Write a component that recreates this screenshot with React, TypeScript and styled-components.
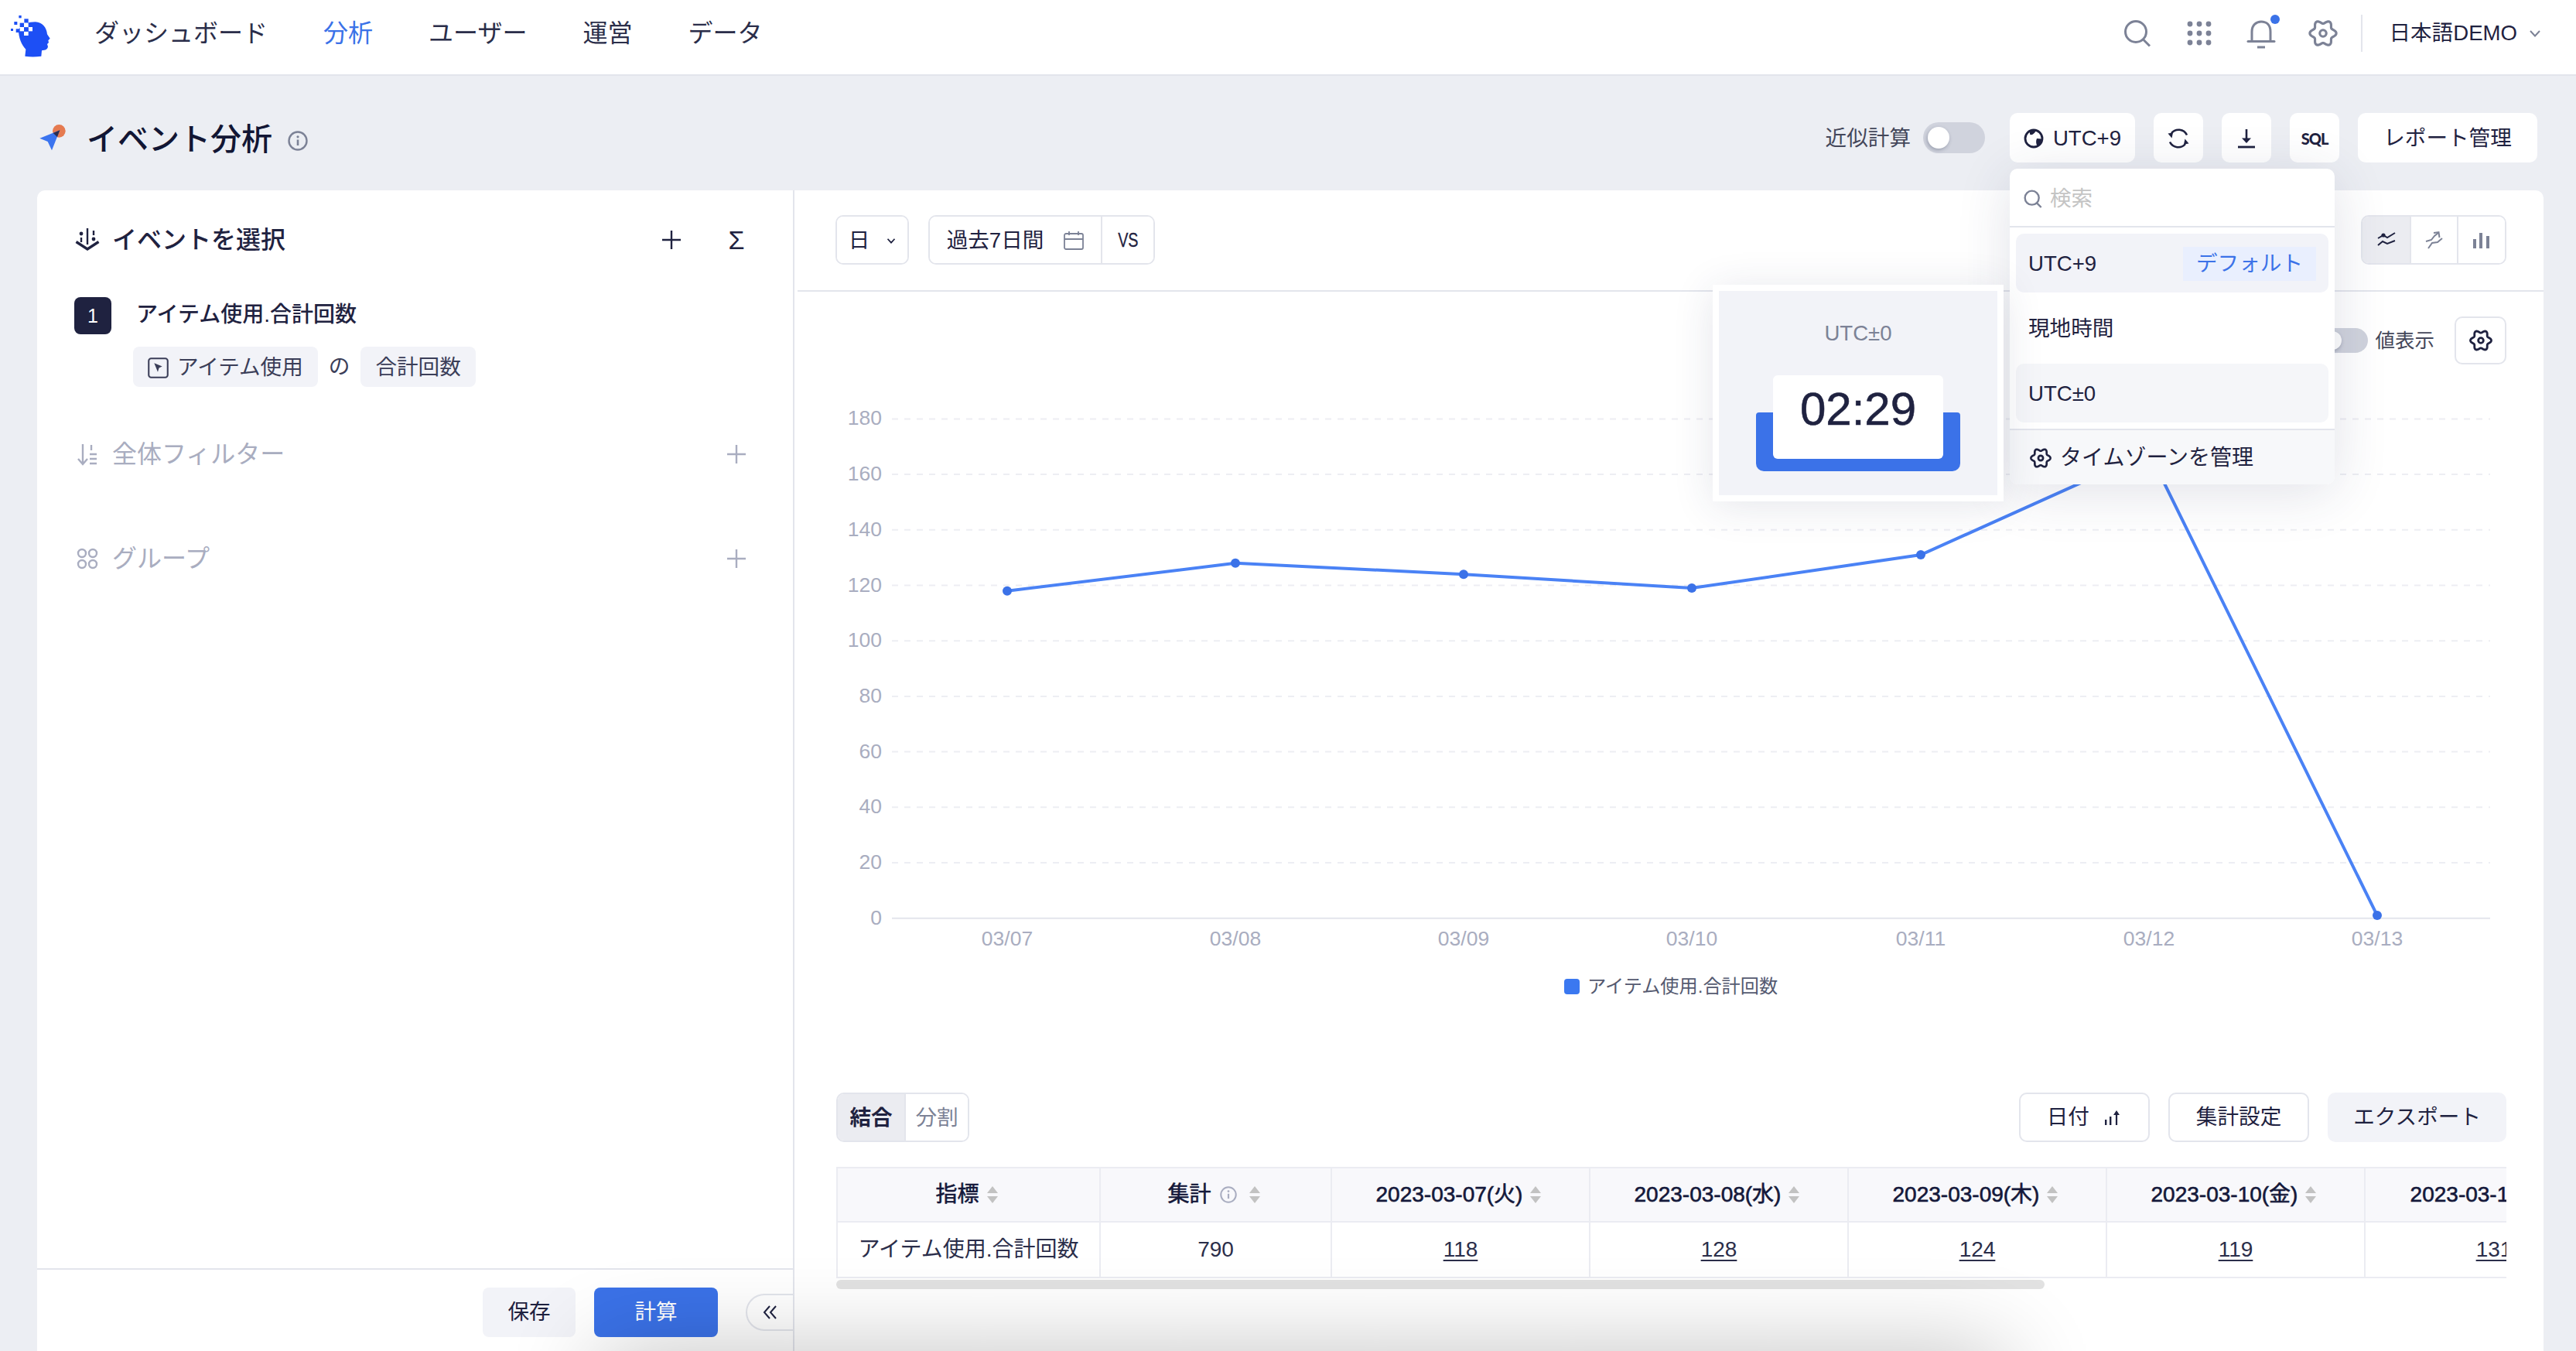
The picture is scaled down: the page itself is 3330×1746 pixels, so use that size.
import React from "react";
import styled, { createGlobalStyle } from "styled-components";

const DARK = "#1F2240";
const GRAY = "#7C8296";
const MUTED = "#A9ADC0";
const BLUE = "#3B72E8";
const LINE = "#E3E5EC";
const SOFT = "#F2F3F8";

const Global = createGlobalStyle`
  * { box-sizing: border-box; }
  html, body { margin: 0; padding: 0; background: #ECEEF3; }
  body {
    font-family: "Liberation Sans", "Noto Sans CJK JP", sans-serif;
    color: ${DARK};
    line-height: 1.2;
    overflow: hidden;
  }
`;

const Page = styled.div`
  position: relative;
  width: 3330px;
  height: 1746px;
  overflow: hidden;
  background: #eceef3;
  display: flex;
  flex-direction: column;
`;

/* ---------- top header ---------- */
const Header = styled.header`
  height: 98px;
  flex: none;
  display: flex;
  align-items: center;
  background: #fff;
  border-bottom: 2px solid ${LINE};
  padding: 0 45px 10px 14px;
`;
const LogoBox = styled.div`
  width: 54px;
  height: 54px;
  margin: 8px 54px 0 0;
  flex: none;
`;
const Nav = styled.nav`
  display: flex;
  gap: 72px;
`;
const NavItem = styled.span<{ $active?: boolean }>`
  font-size: 32px;
  color: ${(p) => (p.$active ? BLUE : "#2B2E4A")};
`;
const HeaderTools = styled.div`
  margin-left: auto;
  display: flex;
  align-items: center;
  gap: 40px;
`;
const IconSlot = styled.div`
  width: 40px;
  height: 40px;
  display: flex;
  align-items: center;
  justify-content: center;
`;
const VDivider = styled.div`
  width: 2px;
  height: 48px;
  background: ${LINE};
  margin-left: -11px;
`;
const Lang = styled.div`
  display: flex;
  align-items: center;
  gap: 15px;
  font-size: 27.6px;
  margin-left: -6px;
`;

/* ---------- title bar ---------- */
const TitleBar = styled.div`
  position: relative;
  z-index: 3;
  flex: none;
  display: flex;
  align-items: center;
  padding: 48px 50px 36px 50px;
`;
const Title = styled.h1`
  margin: 4px 0 0 26px;
  font-size: 40px;
  font-weight: 500;
  color: #121634;
`;
const TitleInfo = styled.div`
  margin: 8px 0 0 20px;
  display: flex;
`;
const TitleActions = styled.div`
  margin-left: auto;
  display: flex;
  align-items: center;
  gap: 24px;
`;
const ApproxLabel = styled.span`
  font-size: 27.6px;
  color: #44475a;
  margin: 2px -8px 0 0;
`;
const Track = styled.div<{ $w: number; $h: number }>`
  width: ${(p) => p.$w}px;
  height: ${(p) => p.$h}px;
  border-radius: ${(p) => p.$h / 2}px;
  background: #d0d3dd;
  display: flex;
  align-items: center;
  padding-left: 6px;
  flex: none;
`;
const Knob = styled.div<{ $s: number }>`
  width: ${(p) => p.$s}px;
  height: ${(p) => p.$s}px;
  border-radius: 50%;
  background: #fff;
  box-shadow: -1px 2px 5px rgba(30, 40, 70, 0.3);
`;
const TopButton = styled.button<{ $w: number }>`
  width: ${(p) => p.$w}px;
  height: 64px;
  display: flex;
  align-items: center;
  justify-content: center;
  gap: 12px;
  border: 0;
  border-radius: 10px;
  background: #fff;
  font: inherit;
  font-size: 27.6px;
  color: ${DARK};
  padding: 2px 0 0;
`;
const SqlText = styled.span`
  font-family: Lato, "Liberation Sans", sans-serif;
  font-weight: 900;
  font-size: 20px;
  letter-spacing: -1px;
`;
const UtcAnchor = styled.div`
  position: relative;
  margin-left: 8px;
`;

/* ---------- dropdown and preview ---------- */
const Dropdown = styled.div`
  position: absolute;
  left: 0;
  top: 72px;
  width: 420px;
  height: 408px;
  background: #fff;
  border-radius: 10px;
  box-shadow: 0 10px 70px rgba(40, 50, 90, 0.14);
  display: flex;
  flex-direction: column;
`;
const SearchRow = styled.div`
  height: 76px;
  flex: none;
  display: flex;
  align-items: center;
  gap: 10px;
  padding: 4px 18px 0;
  border-bottom: 2px solid ${LINE};
  font-size: 27.6px;
  color: #c4c4c4;
`;
const MenuList = styled.div`
  flex: none;
  display: flex;
  flex-direction: column;
  gap: 8px;
  padding: 8px;
  border-bottom: 2px solid ${LINE};
`;
const MenuItem = styled.div<{ $bg?: string }>`
  height: 76px;
  display: flex;
  align-items: center;
  justify-content: space-between;
  padding: 2px 16px 0;
  border-radius: 10px;
  font-size: 27.6px;
  background: ${(p) => p.$bg || "transparent"};
`;
const DefaultTag = styled.span`
  width: 172px;
  height: 44px;
  display: flex;
  align-items: center;
  justify-content: center;
  background: #e9effe;
  color: ${BLUE};
  font-size: 27.6px;
`;
const MenuFooter = styled.div`
  flex: 1;
  display: flex;
  align-items: center;
  gap: 11px;
  padding: 2px 26px 0;
  background: #f7f8fa;
  font-size: 28px;
  border-radius: 0 0 10px 10px;
`;
const Preview = styled.div`
  position: absolute;
  right: calc(100% + 8px);
  top: 222px;
  width: 376px;
  height: 280px;
  padding: 38px 0 0;
  border: 8px solid #fff;
  background: ${SOFT};
  box-shadow: 0 6px 50px rgba(40, 50, 90, 0.12);
  display: flex;
  flex-direction: column;
  align-items: center;
`;
const PreviewLabel = styled.div`
  font-size: 27.6px;
  color: ${GRAY};
  margin-bottom: 38px;
`;
const TimeCard = styled.div`
  position: relative;
  width: 220px;
  height: 108px;
  padding-top: 8px;
  border-radius: 6px;
  background: #fff;
  font-size: 60px;
  font-weight: 500;
  text-align: center;
  color: ${DARK};
  -webkit-text-stroke: 0.6px ${DARK};
`;
const TimeTray = styled.div`
  width: 264px;
  height: 76px;
  margin-top: -60px;
  border-radius: 4px 4px 10px 10px;
  background: ${BLUE};
`;

/* ---------- body ---------- */
const Body = styled.main`
  flex: 1;
  min-height: 0;
  display: flex;
  margin-left: 48px;
  width: 3240px;
`;
const LeftPanel = styled.aside`
  width: 979px;
  flex: none;
  display: flex;
  flex-direction: column;
  background: #fff;
  border-right: 2px solid ${LINE};
  border-radius: 10px 0 0 0;
  padding-top: 40px;
`;
const SectionRow = styled.div<{ $top?: number; $muted?: boolean }>`
  height: 48px;
  margin: ${(p) => p.$top ?? 0}px 48px 0 48px;
  display: flex;
  align-items: center;
  font-size: 32px;
  color: ${(p) => (p.$muted ? MUTED : DARK)};
`;
const SectionIcon = styled.div`
  width: 33px;
  margin-right: 16px;
  display: flex;
  justify-content: center;
  flex: none;
`;
const SectionTitle = styled.span<{ $medium?: boolean }>`
  flex: 1;
  font-weight: ${(p) => (p.$medium ? 500 : 400)};
`;
const SectionAction = styled.div`
  width: 30px;
  height: 40px;
  display: flex;
  align-items: center;
  justify-content: center;
  margin-left: 54px;
  margin-right: 10px;
  font-size: 34px;
`;
const PlusAction = styled(SectionAction)`
  margin-right: 0;
`;
const EventRow = styled.div`
  margin: 50px 48px 0;
  display: flex;
  align-items: center;
  gap: 33px;
  font-size: 28px;
  font-weight: 500;
`;
const IndexBadge = styled.div`
  width: 48px;
  height: 48px;
  border-radius: 8px;
  display: flex;
  align-items: center;
  justify-content: center;
  background: ${DARK};
  color: #fff;
  font-size: 25px;
  font-weight: 400;
`;
const EventName = styled.span`
  margin: -3px 0 0 -1px;
`;
const TagRow = styled.div`
  margin: 16px 0 0 124px;
  display: flex;
  align-items: center;
  gap: 14px;
  font-size: 27.6px;
  color: #3b3e58;
`;
const Tag = styled.div`
  height: 52px;
  padding: 2px 19px 0;
  border-radius: 8px;
  display: flex;
  align-items: center;
  gap: 11px;
  background: ${SOFT};
`;
const LeftFooter = styled.div`
  margin-top: auto;
  height: 107px;
  flex: none;
  border-top: 2px solid ${LINE};
  padding-top: 23px;
  display: flex;
  align-items: flex-start;
  justify-content: flex-end;
`;
const SaveButton = styled.button<{ $primary?: boolean }>`
  width: ${(p) => (p.$primary ? 160 : 120)}px;
  height: 64px;
  margin-right: ${(p) => (p.$primary ? 36 : 24)}px;
  border: 0;
  border-radius: 8px;
  font: inherit;
  font-size: 27.6px;
  background: ${(p) => (p.$primary ? BLUE : SOFT)};
  color: ${(p) => (p.$primary ? "#fff" : DARK)};
`;
const CollapseTab = styled.button`
  width: 61px;
  height: 48px;
  margin-top: 8px;
  border: 2px solid ${LINE};
  border-right: 0;
  border-radius: 24px 0 0 24px;
  background: #fff;
  display: flex;
  align-items: center;
  justify-content: center;
  padding: 0;
`;

const RightPanel = styled.section`
  flex: 1;
  min-width: 0;
  background: #fff;
  border-radius: 0 10px 0 0;
  display: flex;
  flex-direction: column;
`;
const ChartHead = styled.div`
  height: 131px;
  flex: none;
  margin-left: 4px;
  padding: 32px 48px 0 49px;
  border-bottom: 2px solid ${LINE};
  display: flex;
  align-items: flex-start;
  gap: 25px;
`;
const SegGroup = styled.div<{ $end?: boolean }>`
  display: flex;
  height: 64px;
  border: 2px solid ${LINE};
  border-radius: 10px;
  overflow: hidden;
  margin-left: ${(p) => (p.$end ? "auto" : 0)};
`;
const Segment = styled.div<{ $w: number; $active?: boolean; $muted?: boolean }>`
  width: ${(p) => p.$w}px;
  padding-top: 2px;
  display: flex;
  align-items: center;
  justify-content: center;
  gap: 22px;
  font-size: 27.6px;
  font-weight: ${(p) => (p.$active ? 600 : 400)};
  color: ${(p) => (p.$muted ? GRAY : DARK)};
  background: ${(p) => (p.$active ? "#EBECF1" : "#fff")};
  & + & {
    border-left: 2px solid ${LINE};
  }
`;
const DateSegment = styled(Segment)`
  gap: 26px;
`;
const VsText = styled.span`
  display: inline-block;
  font-size: 26px;
  transform: scaleX(0.76);
  -webkit-text-stroke: 0.3px ${DARK};
`;
const ChartTools = styled.div`
  margin-top: 32px;
  padding-right: 48px;
  display: flex;
  justify-content: flex-end;
  align-items: center;
  height: 62px;
  flex: none;
`;
const ValueLabel = styled.span`
  font-size: 25.5px;
  color: #44475a;
  margin: 0 26px 0 9px;
`;
const GearButton = styled.div`
  width: 67px;
  height: 62px;
  border: 2px solid ${LINE};
  border-radius: 10px;
  display: flex;
  align-items: center;
  justify-content: center;
`;
const ChartSvg = styled.svg`
  display: block;
  margin-top: 29px;
  flex: none;
`;
const ResultBar = styled.div`
  margin-top: 112px;
  padding: 0 48px 0 54px;
  display: flex;
  align-items: center;
  gap: 24px;
  flex: none;
`;
const ToolButton = styled.button<{ $filled?: boolean }>`
  height: 64px;
  padding: 0 ${(p) => (p.$filled ? 33 : 34)}px;
  display: flex;
  align-items: center;
  gap: 18px;
  border: ${(p) => (p.$filled ? "0" : `2px solid ${LINE}`)};
  border-radius: 10px;
  background: ${(p) => (p.$filled ? SOFT : "#fff")};
  font: inherit;
  font-size: 27.6px;
  color: ${DARK};
`;
const ResultSpacer = styled.div`
  flex: 1;
`;
const TableWrap = styled.div`
  margin: 32px 48px 0 54px;
  overflow: hidden;
  flex: none;
`;
const Table = styled.table`
  width: 2309px;
  table-layout: fixed;
  border-collapse: separate;
  border-spacing: 0;
  font-size: 28px;
`;
const Col = styled.col<{ $w: number }>`
  width: ${(p) => p.$w}px;
`;
const Th = styled.th`
  height: 72px;
  padding: 0;
  font-weight: 400;
  -webkit-text-stroke: 0.6px #14183a;
  color: #14183a;
  background: #f8f8fb;
  border-top: 2px solid #ebecf2;
  border-bottom: 2px solid #ebecf2;
  border-left: 2px solid #ebecf2;
`;
const Td = styled.td`
  height: 72px;
  padding: 0;
  text-align: center;
  color: #2b2e4a;
  border-bottom: 2px solid #ebecf2;
  border-left: 2px solid #ebecf2;
`;
const ThInner = styled.div`
  display: flex;
  align-items: center;
  justify-content: center;
  gap: 9px;
  padding-right: 4px;
`;
const InfoSlot = styled.span`
  display: flex;
  margin: 0 6px 0 2px;
`;
const CellLink = styled.span`
  text-decoration: underline;
  text-underline-offset: 4px;
`;
const ScrollThumb = styled.div`
  margin: 2px 0 0 54px;
  width: 1562px;
  height: 12px;
  border-radius: 6px;
  background: #e2e2e2;
  flex: none;
`;
const BottomShade = styled.div`
  position: absolute;
  left: 775px;
  top: 1746px;
  width: 1815px;
  height: 300px;
  z-index: 2;
  box-shadow: 0 0 120px rgba(0, 0, 0, 0.24);
`;

/* ---------- drawings ---------- */
function gearPath(cx: number, cy: number, r: number, amp: number, lobes = 6) {
  const pts: string[] = [];
  for (let i = 0; i < 96; i++) {
    const t = (i / 96) * Math.PI * 2;
    const rad = r + amp * Math.cos(lobes * t);
    pts.push(`${(cx + rad * Math.cos(t)).toFixed(2)} ${(cy + rad * Math.sin(t)).toFixed(2)}`);
  }
  return `M${pts.join("L")}Z`;
}

const Gear = ({ size, color, sw = 3 }: { size: number; color: string; sw?: number }) => (
  <svg width={size} height={size} viewBox="0 0 36 36" fill="none">
    <path d={gearPath(18, 18, 14, 2.2)} stroke={color} strokeWidth={sw} strokeLinejoin="round" />
    <circle cx="18" cy="18" r="4" stroke={color} strokeWidth={sw} />
  </svg>
);

const Logo = () => (
  <svg width="54" height="54" viewBox="45 45 162 162">
    <path
      d="M75 100C90 78 112 70 140 70C168 72 184 92 186 118L197 134L190 142L192 150L186 156L189 166C187 176 180 180 165 181L163 203C140 206 120 206 100 203L103 176C88 162 74 130 75 100Z"
      fill="#1D4FF5"
    />
    <rect x="97" y="58" width="16" height="16" fill="#1D4FF5" />
    <rect x="80" y="74" width="16" height="16" fill="#1D4FF5" />
    <rect x="58" y="69" width="12" height="12" fill="#1D4FF5" />
    <rect x="76" y="45" width="10" height="10" fill="#1D4FF5" />
    <rect x="45" y="96" width="9" height="9" fill="#1D4FF5" />
    <rect x="65" y="97" width="14" height="14" fill="#1D4FF5" />
    <rect x="96" y="74" width="17" height="17" fill="#fff" />
    <rect x="80" y="90" width="16" height="16" fill="#fff" />
    <rect x="113" y="90" width="16" height="16" fill="#fff" />
    <rect x="96" y="107" width="17" height="16" fill="#fff" />
    <rect x="96" y="91" width="17" height="16" fill="#1D4FF5" />
  </svg>
);

const FlagIcon = () => (
  <svg width="36" height="36" viewBox="150 484 108 108">
    <circle cx="229" cy="512" r="25" fill="#E57A50" />
    <path d="M154 540L232 509L201 587L185 553Z" fill="#3B74EF" strokeLinejoin="round" />
    <path d="M206 520L232 509L222 535Z" fill="#2B2D4F" />
  </svg>
);

const InfoIcon = ({ size = 26, color = GRAY }: { size?: number; color?: string }) => (
  <svg width={size} height={size} viewBox="0 0 26 26" fill="none">
    <circle cx="13" cy="13" r="11.5" stroke={color} strokeWidth="2.4" />
    <circle cx="13" cy="7.8" r="1.6" fill={color} />
    <path d="M13 11.5V19" stroke={color} strokeWidth="2.6" />
  </svg>
);

const SearchIcon = ({ size = 36, sw = 3 }: { size?: number; sw?: number }) => (
  <svg width={size} height={size} viewBox="0 0 36 36" fill="none">
    <circle cx="16" cy="16" r="13.5" stroke={GRAY} strokeWidth={sw} />
    <path d="M25.5 26L34 34.5" stroke={GRAY} strokeWidth={sw} />
  </svg>
);

const DotsIcon = () => (
  <svg width="32" height="32" viewBox="0 0 32 32" fill={GRAY}>
    {[4, 16, 28].map((y) =>
      [4, 16, 28].map((x) => <circle key={`${x}-${y}`} cx={x} cy={y} r="3.4" />)
    )}
  </svg>
);

const BellIcon = () => (
  <svg width="46" height="46" viewBox="-3 0 46 46" fill="none" style={{ overflow: "visible" }}>
    <path d="M8 33V21C8 12 14 8 20 8C27 8 32 12 32 21V33" stroke={GRAY} strokeWidth="3" />
    <path d="M3 33.5H37" stroke={GRAY} strokeWidth="3" strokeLinecap="round" />
    <path d="M15 41H25" stroke={GRAY} strokeWidth="3" />
    <circle cx="38" cy="5" r="6" fill={BLUE} />
  </svg>
);

const Chevron = ({ size = 16, color = GRAY, sw = 2 }: { size?: number; color?: string; sw?: number }) => (
  <svg width={size} height={size} viewBox="0 0 16 16" fill="none">
    <path d="M2 5L8 11.5L14 5" stroke={color} strokeWidth={sw} />
  </svg>
);

const GlobeIcon = () => (
  <svg width="26" height="26" viewBox="0 0 26 26" fill="none">
    <circle cx="13" cy="13" r="11" stroke={DARK} strokeWidth="2.8" />
    <path d="M8 3.5L15 2.5C15.5 5.5 13.5 6 12 7.5C10.5 8.5 9 8.5 8 7.5Z" fill={DARK} />
    <path d="M17 13L23.5 13.5C23 17.5 20.5 21 17.5 23C16 20 15.5 16 17 13Z" fill={DARK} />
  </svg>
);

const RefreshIcon = () => (
  <svg width="28" height="28" viewBox="0 0 28 28" fill="none">
    <path d="M5 7A12 12 0 0 1 25 9.5" stroke={DARK} strokeWidth="2.6" />
    <path d="M23 21A12 12 0 0 1 3 18.5" stroke={DARK} strokeWidth="2.6" />
    <path d="M0.5 7.5L7 6.5L5.5 13.5Z" fill={DARK} />
    <path d="M27.5 20.5L21 21.5L22.5 14.5Z" fill={DARK} />
  </svg>
);

const DownloadIcon = () => (
  <svg width="24" height="26" viewBox="0 0 24 26" fill="none">
    <path d="M12 1V16" stroke={DARK} strokeWidth="2.6" />
    <path d="M6 12.5H18L12 19Z" fill={DARK} />
    <path d="M1 24H23" stroke={DARK} strokeWidth="2.8" />
  </svg>
);

const EventIcon = () => (
  <svg width="32" height="32" viewBox="0 0 32 32" fill="none" stroke={DARK}>
    <path d="M1.5 18.5L16 28L30.5 18.5" strokeWidth="3.4" />
    <path d="M16 1V22" strokeWidth="2.4" />
    <circle cx="8" cy="8" r="2.4" fill={DARK} stroke="none" />
    <path d="M8 13V19" strokeWidth="2.4" />
    <path d="M24 4V10" strokeWidth="2.4" />
    <circle cx="24" cy="15" r="2.4" fill={DARK} stroke="none" />
  </svg>
);

const PlusIcon = ({ color = DARK, size = 26 }: { color?: string; size?: number }) => (
  <svg width={size} height={size} viewBox="0 0 26 26" fill="none">
    <path d="M13 1V25M1 13H25" stroke={color} strokeWidth="2.4" />
  </svg>
);

const CursorBox = () => (
  <svg width="27" height="27" viewBox="0 0 26 26" fill="none">
    <rect x="1.2" y="1.2" width="23.6" height="23.6" rx="3" stroke="#3B3E58" strokeWidth="2" />
    <path d="M8 7L18 11L14 13L12.5 18Z" fill="#3B3E58" />
  </svg>
);

const FilterIcon = () => (
  <svg width="26" height="30" viewBox="0 0 26 30" fill="none" stroke={MUTED} strokeWidth="2.4">
    <path d="M7 2V27M1 21L7 28L13 21" />
    <path d="M18 3V10" />
    <path d="M16 15H25M16 21H25M16 27H25" />
  </svg>
);

const GroupIcon = () => (
  <svg width="28" height="28" viewBox="0 0 28 28" fill="none" stroke={MUTED} strokeWidth="2.4">
    <circle cx="7" cy="7" r="5" />
    <circle cx="21" cy="7" r="5" />
    <circle cx="7" cy="21" r="5" />
    <circle cx="21" cy="21" r="5" />
  </svg>
);

const CalendarIcon = () => (
  <svg width="26" height="26" viewBox="0 0 26 26" fill="none" stroke={GRAY} strokeWidth="1.8">
    <rect x="1" y="4" width="24" height="20" rx="2" />
    <path d="M1 11H25M7 1V6M19 1V6" />
  </svg>
);

const LinesIcon = () => (
  <svg width="24" height="24" viewBox="0 0 24 24" fill="none" stroke={DARK} strokeWidth="2">
    <path d="M1 9L8 5L13 8L23 2" />
    <circle cx="8" cy="5" r="2.6" fill={DARK} stroke="none" />
    <path d="M1 18L7 13L13 16L23 12" />
  </svg>
);

const ArrowLinesIcon = () => (
  <svg width="24" height="24" viewBox="0 0 24 24" fill="none" stroke={GRAY} strokeWidth="2">
    <path d="M1 13L8 11L12 6L17 2" />
    <path d="M11 2L17.5 1.2L18.5 8" />
    <path d="M4 22L9 15L16 14L22 9" />
  </svg>
);

const BarsIcon = () => (
  <svg width="22" height="20" viewBox="0 0 22 20" fill={GRAY}>
    <rect x="0" y="8" width="4" height="12" />
    <rect x="8" y="0" width="4" height="20" />
    <rect x="17" y="4" width="4" height="16" />
  </svg>
);

const MiniSortBars = () => (
  <svg width="24" height="22" viewBox="0 0 24 22" fill="none">
    <rect x="2" y="14" width="2.4" height="7" fill={DARK} />
    <rect x="8" y="10" width="2.4" height="11" fill={DARK} />
    <path d="M17 21V4" stroke={DARK} strokeWidth="2.2" />
    <path d="M13 8L17 2L21 8Z" fill={DARK} />
  </svg>
);

const SortIcon = () => (
  <svg width="16" height="24" viewBox="0 0 16 24" fill="#C2C2C2" stroke="none">
    <path d="M8 1L15 10H1Z" />
    <path d="M1 14H15L8 23Z" />
  </svg>
);

const DoubleLeft = () => (
  <svg width="20" height="20" viewBox="0 0 20 20" fill="none" stroke={DARK} strokeWidth="2">
    <path d="M9 2L2 10L9 18M17 2L10 10L17 18" />
  </svg>
);

/* ---------- chart data ---------- */
const PLOT = { left: 1153, right: 3219, zero: 1186.7, unit: 3.585 };
const yOf = (v: number) => PLOT.zero - v * PLOT.unit;
const TICKS = [0, 20, 40, 60, 80, 100, 120, 140, 160, 180];
const POINTS = [
  { label: "03/07", x: 1302, v: 118 },
  { label: "03/08", x: 1597, v: 128 },
  { label: "03/09", x: 1892, v: 124 },
  { label: "03/10", x: 2187, v: 119 },
  { label: "03/11", x: 2483, v: 131 },
  { label: "03/12", x: 2778, v: 168 },
  { label: "03/13", x: 3073, v: 1 },
];
const DATES = [
  "2023-03-07(火)",
  "2023-03-08(水)",
  "2023-03-09(木)",
  "2023-03-10(金)",
  "2023-03-11(土)",
];
const VALUES = ["118", "128", "124", "119", "131"];

const AxisText = styled.text`
  font-size: 26.5px;
  fill: ${MUTED};
`;
const LegendText = styled.text`
  font-size: 24.2px;
  fill: #555a70;
`;

const Chart = () => (
  <ChartSvg width="2261" height="800" viewBox="1027 500 2261 800">
    {TICKS.map((t) => (
      <g key={t}>
        <line
          x1={PLOT.left}
          x2={PLOT.right}
          y1={yOf(t)}
          y2={yOf(t)}
          stroke={t === 0 ? "#E3E5EC" : "#EDEEF3"}
          strokeWidth="2"
          strokeDasharray={t === 0 ? undefined : "8 8"}
        />
        <AxisText x="1140" y={yOf(t) + 8} textAnchor="end">
          {t}
        </AxisText>
      </g>
    ))}
    <polyline
      points={POINTS.map((p) => `${p.x},${yOf(p.v)}`).join(" ")}
      fill="none"
      stroke="#4A82F5"
      strokeWidth="4"
    />
    {POINTS.map((p) => (
      <g key={p.label}>
        <circle cx={p.x} cy={yOf(p.v)} r="6" fill="#3B72E8" />
        <AxisText x={p.x} y="1222" textAnchor="middle">
          {p.label}
        </AxisText>
      </g>
    ))}
    <rect x="2022" y="1265" width="20" height="20" rx="4" fill="#3B78F0" />
    <LegendText x="2052" y="1283">
      アイテム使用.合計回数
    </LegendText>
  </ChartSvg>
);

export default function App() {
  return (
    <Page>
      <Global />
      <Header>
        <LogoBox>
          <Logo />
        </LogoBox>
        <Nav>
          <NavItem>ダッシュボード</NavItem>
          <NavItem $active>分析</NavItem>
          <NavItem>ユーザー</NavItem>
          <NavItem>運営</NavItem>
          <NavItem>データ</NavItem>
        </Nav>
        <HeaderTools>
          <IconSlot>
            <SearchIcon />
          </IconSlot>
          <IconSlot>
            <DotsIcon />
          </IconSlot>
          <IconSlot>
            <BellIcon />
          </IconSlot>
          <IconSlot>
            <Gear size={38} color={GRAY} />
          </IconSlot>
          <VDivider />
          <Lang>
            日本語DEMO
            <Chevron />
          </Lang>
        </HeaderTools>
      </Header>

      <TitleBar>
        <FlagIcon />
        <Title>イベント分析</Title>
        <TitleInfo>
          <InfoIcon />
        </TitleInfo>
        <TitleActions>
          <ApproxLabel>近似計算</ApproxLabel>
          <Track $w={80} $h={40}>
            <Knob $s={28} />
          </Track>
          <UtcAnchor>
            <TopButton $w={162}>
              <GlobeIcon />
              UTC+9
            </TopButton>
            <Dropdown>
              <SearchRow>
                <SearchIcon size={24} sw={3.6} />
                検索
              </SearchRow>
              <MenuList>
                <MenuItem $bg={SOFT}>
                  UTC+9
                  <DefaultTag>デフォルト</DefaultTag>
                </MenuItem>
                <MenuItem>現地時間</MenuItem>
                <MenuItem $bg="#F5F6F9">UTC±0</MenuItem>
              </MenuList>
              <MenuFooter>
                <Gear size={28} color={DARK} sw={3.4} />
                タイムゾーンを管理
              </MenuFooter>
            </Dropdown>
            <Preview>
              <PreviewLabel>UTC±0</PreviewLabel>
              <TimeCard>02:29</TimeCard>
              <TimeTray />
            </Preview>
          </UtcAnchor>
          <TopButton $w={64}>
            <RefreshIcon />
          </TopButton>
          <TopButton $w={64}>
            <DownloadIcon />
          </TopButton>
          <TopButton $w={64}>
            <SqlText>SQL</SqlText>
          </TopButton>
          <TopButton $w={232}>レポート管理</TopButton>
        </TitleActions>
      </TitleBar>

      <Body>
        <LeftPanel>
          <SectionRow>
            <SectionIcon>
              <EventIcon />
            </SectionIcon>
            <SectionTitle $medium>イベントを選択</SectionTitle>
            <PlusAction>
              <PlusIcon />
            </PlusAction>
            <SectionAction>Σ</SectionAction>
          </SectionRow>
          <EventRow>
            <IndexBadge>1</IndexBadge>
            <EventName>アイテム使用.合計回数</EventName>
          </EventRow>
          <TagRow>
            <Tag>
              <CursorBox />
              アイテム使用
            </Tag>
            の
            <Tag>合計回数</Tag>
          </TagRow>
          <SectionRow $top={63} $muted>
            <SectionIcon>
              <FilterIcon />
            </SectionIcon>
            <SectionTitle>全体フィルター</SectionTitle>
            <SectionAction>
              <PlusIcon color={MUTED} />
            </SectionAction>
          </SectionRow>
          <SectionRow $top={87} $muted>
            <SectionIcon>
              <GroupIcon />
            </SectionIcon>
            <SectionTitle>グループ</SectionTitle>
            <SectionAction>
              <PlusIcon color={MUTED} />
            </SectionAction>
          </SectionRow>
          <LeftFooter>
            <SaveButton>保存</SaveButton>
            <SaveButton $primary>計算</SaveButton>
            <CollapseTab>
              <DoubleLeft />
            </CollapseTab>
          </LeftFooter>
        </LeftPanel>

        <RightPanel>
          <ChartHead>
            <SegGroup>
              <Segment $w={91}>
                日
                <Chevron size={12} color={DARK} sw={2.4} />
              </Segment>
            </SegGroup>
            <SegGroup>
              <DateSegment $w={221}>
                過去7日間
                <CalendarIcon />
              </DateSegment>
              <Segment $w={68}>
                <VsText>VS</VsText>
              </Segment>
            </SegGroup>
            <SegGroup $end>
              <Segment $w={61} $active>
                <LinesIcon />
              </Segment>
              <Segment $w={61}>
                <ArrowLinesIcon />
              </Segment>
              <Segment $w={62}>
                <BarsIcon />
              </Segment>
            </SegGroup>
          </ChartHead>
          <ChartTools>
            <Track $w={64} $h={32}>
              <Knob $s={24} />
            </Track>
            <ValueLabel>値表示</ValueLabel>
            <GearButton>
              <Gear size={30} color={DARK} sw={3.4} />
            </GearButton>
          </ChartTools>
          <Chart />
          <ResultBar>
            <SegGroup>
              <Segment $w={86} $active>
                結合
              </Segment>
              <Segment $w={82} $muted>
                分割
              </Segment>
            </SegGroup>
            <ResultSpacer />
            <ToolButton>
              日付
              <MiniSortBars />
            </ToolButton>
            <ToolButton>集計設定</ToolButton>
            <ToolButton $filled>エクスポート</ToolButton>
          </ResultBar>
          <TableWrap>
            <Table>
              <colgroup>
                <Col $w={340} />
                <Col $w={299} />
                {DATES.map((d) => (
                  <Col key={d} $w={334} />
                ))}
              </colgroup>
              <thead>
                <tr>
                  <Th>
                    <ThInner>
                      指標
                      <SortIcon />
                    </ThInner>
                  </Th>
                  <Th>
                    <ThInner>
                      集計
                      <InfoSlot>
                        <InfoIcon size={22} color={MUTED} />
                      </InfoSlot>
                      <SortIcon />
                    </ThInner>
                  </Th>
                  {DATES.map((d) => (
                    <Th key={d}>
                      <ThInner>
                        {d}
                        <SortIcon />
                      </ThInner>
                    </Th>
                  ))}
                </tr>
              </thead>
              <tbody>
                <tr>
                  <Td>アイテム使用.合計回数</Td>
                  <Td>790</Td>
                  {VALUES.map((v) => (
                    <Td key={v}>
                      <CellLink>{v}</CellLink>
                    </Td>
                  ))}
                </tr>
              </tbody>
            </Table>
          </TableWrap>
          <ScrollThumb />
        </RightPanel>
      </Body>
      <BottomShade />
    </Page>
  );
}
